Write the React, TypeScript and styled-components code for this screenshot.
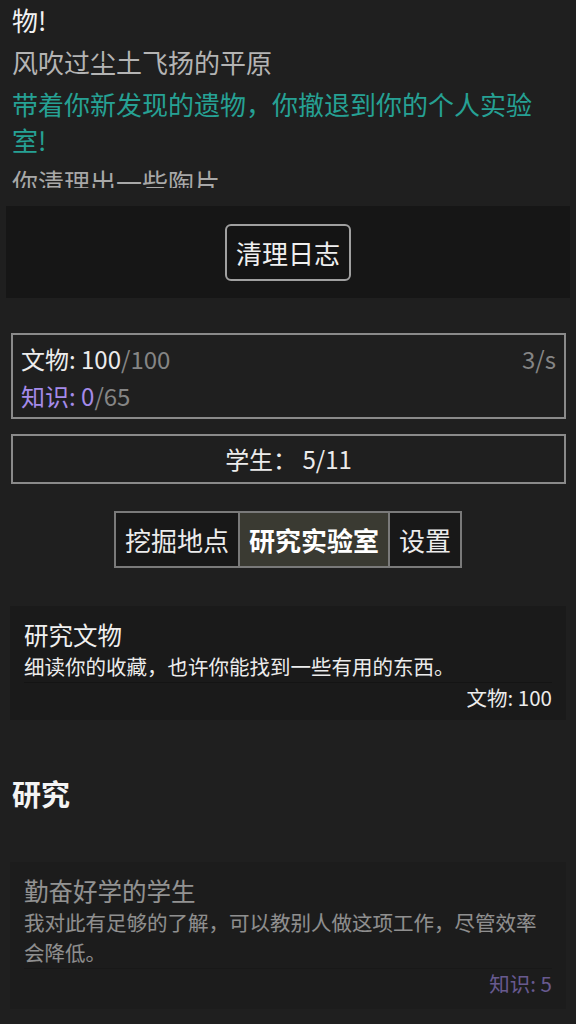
import React from "react";
import styled, { createGlobalStyle } from "styled-components";

const GlobalStyle = createGlobalStyle`
  html, body {
    margin: 0;
    padding: 0;
    background: #1f1f1f;
  }
  body {
    font-family: "Noto Sans CJK SC", "Noto Sans", sans-serif;
    color: #ececec;
  }
  * { box-sizing: border-box; }
`;

const Page = styled.div`
  width: 576px;
  min-height: 1024px;
  background: #1f1f1f;
  padding-bottom: 20px;
`;

const Log = styled.div`
  height: 188px;
  overflow: hidden;
  padding: 2px 12px 0;
`;

const LogLine = styled.p<{ $tone: "bright" | "dim" | "event" | "faded" }>`
  margin: 0 0 6px;
  font-size: 26px;
  line-height: 36px;
  color: ${(p) =>
    p.$tone === "bright"
      ? "#f2f2f2"
      : p.$tone === "event"
      ? "#26a194"
      : p.$tone === "faded"
      ? "#a8a8a8"
      : "#b4b4b4"};
`;

const Panel = styled.div`
  margin: 18px 6px 0;
  height: 92px;
  background: #161616;
  display: flex;
  align-items: center;
  justify-content: center;
`;

const ClearButton = styled.button`
  font-family: inherit;
  font-size: 26px;
  line-height: 36px;
  color: #f0f0f0;
  background: #141414;
  border: 2px solid #a0a0a0;
  border-radius: 6px;
  padding: 9px 9px 8px;
  white-space: nowrap;
  cursor: pointer;
`;

const StatBox = styled.div`
  margin: 35px 10px 0 11px;
  border: 2px solid #8a8a8a;
  padding: 5px 8px 3px;
`;

const StatLine = styled.div`
  font-size: 24px;
  line-height: 37px;
  display: flex;
`;

const Label = styled.span<{ $color: string }>`
  color: ${(p) => p.$color};
`;

const Muted = styled.span`
  color: #858585;
`;

const Rate = styled.span`
  margin-left: auto;
  color: #858585;
  font-size: 24px;
`;

const StudentBox = styled.div`
  margin: 15px 10px 0 11px;
  border: 2px solid #8a8a8a;
  font-size: 24px;
  line-height: 46px;
  text-align: center;
  color: #ececec;
`;

const Tabs = styled.div`
  margin-top: 27px;
  display: flex;
  justify-content: center;
  padding-left: 2px;
`;

const Tab = styled.button<{ $active?: boolean }>`
  font-family: inherit;
  font-size: 26px;
  line-height: 53px;
  padding: 0 9px;
  border: 2px solid #7a7a7a;
  margin-left: -2px;
  background: ${(p) => (p.$active ? "#3a3a32" : "#181818")};
  color: ${(p) => (p.$active ? "#ffffff" : "#ececec")};
  font-weight: ${(p) => (p.$active ? 700 : 400)};
  white-space: nowrap;
  cursor: pointer;
`;

const Card = styled.div<{ $disabled?: boolean }>`
  margin: ${(p) => (p.$disabled ? "49px" : "38px")} 10px 0;
  background: #1a1a1a;
  padding: 13px 14px ${(p) => (p.$disabled ? "12px" : "9px")};
  opacity: ${(p) => (p.$disabled ? 0.55 : 1)};
`;

const CardTitle = styled.div`
  font-size: 24.5px;
  line-height: 32px;
  color: #f0f0f0;
`;

const CardDesc = styled.div`
  font-size: 20.5px;
  line-height: 30px;
  color: #ececec;
  border-bottom: 1px solid #141414;
  padding-bottom: 1px;
`;

const Cost = styled.div<{ $color: string }>`
  text-align: right;
  font-size: 20.5px;
  line-height: 28px;
  color: ${(p) => p.$color};
`;

const Heading = styled.h2`
  margin: 53px 12px 0;
  font-size: 29px;
  line-height: 40px;
  font-weight: 700;
  color: #f4f4f4;
`;

export default function App() {
  return (
    <Page>
      <GlobalStyle />
      <Log>
        <LogLine $tone="bright">物!</LogLine>
        <LogLine $tone="dim">风吹过尘土飞扬的平原</LogLine>
        <LogLine $tone="event">带着你新发现的遗物，你撤退到你的个人实验室!</LogLine>
        <LogLine $tone="faded">你清理出一些陶片</LogLine>
      </Log>
      <Panel>
        <ClearButton>清理日志</ClearButton>
      </Panel>
      <StatBox>
        <StatLine>
          <Label $color="#ececec">文物: 100</Label>
          <Muted>/100</Muted>
          <Rate>3/s</Rate>
        </StatLine>
        <StatLine>
          <Label $color="#a58bea">知识: 0</Label>
          <Muted>/65</Muted>
        </StatLine>
      </StatBox>
      <StudentBox>学生：&nbsp;5/11</StudentBox>
      <Tabs>
        <Tab>挖掘地点</Tab>
        <Tab $active>研究实验室</Tab>
        <Tab>设置</Tab>
      </Tabs>
      <Card>
        <CardTitle>研究文物</CardTitle>
        <CardDesc>细读你的收藏，也许你能找到一些有用的东西。</CardDesc>
        <Cost $color="#ececec">文物: 100</Cost>
      </Card>
      <Heading>研究</Heading>
      <Card $disabled>
        <CardTitle>勤奋好学的学生</CardTitle>
        <CardDesc>我对此有足够的了解，可以教别人做这项工作，尽管效率会降低。</CardDesc>
        <Cost $color="#a58bea">知识: 5</Cost>
      </Card>
    </Page>
  );
}
